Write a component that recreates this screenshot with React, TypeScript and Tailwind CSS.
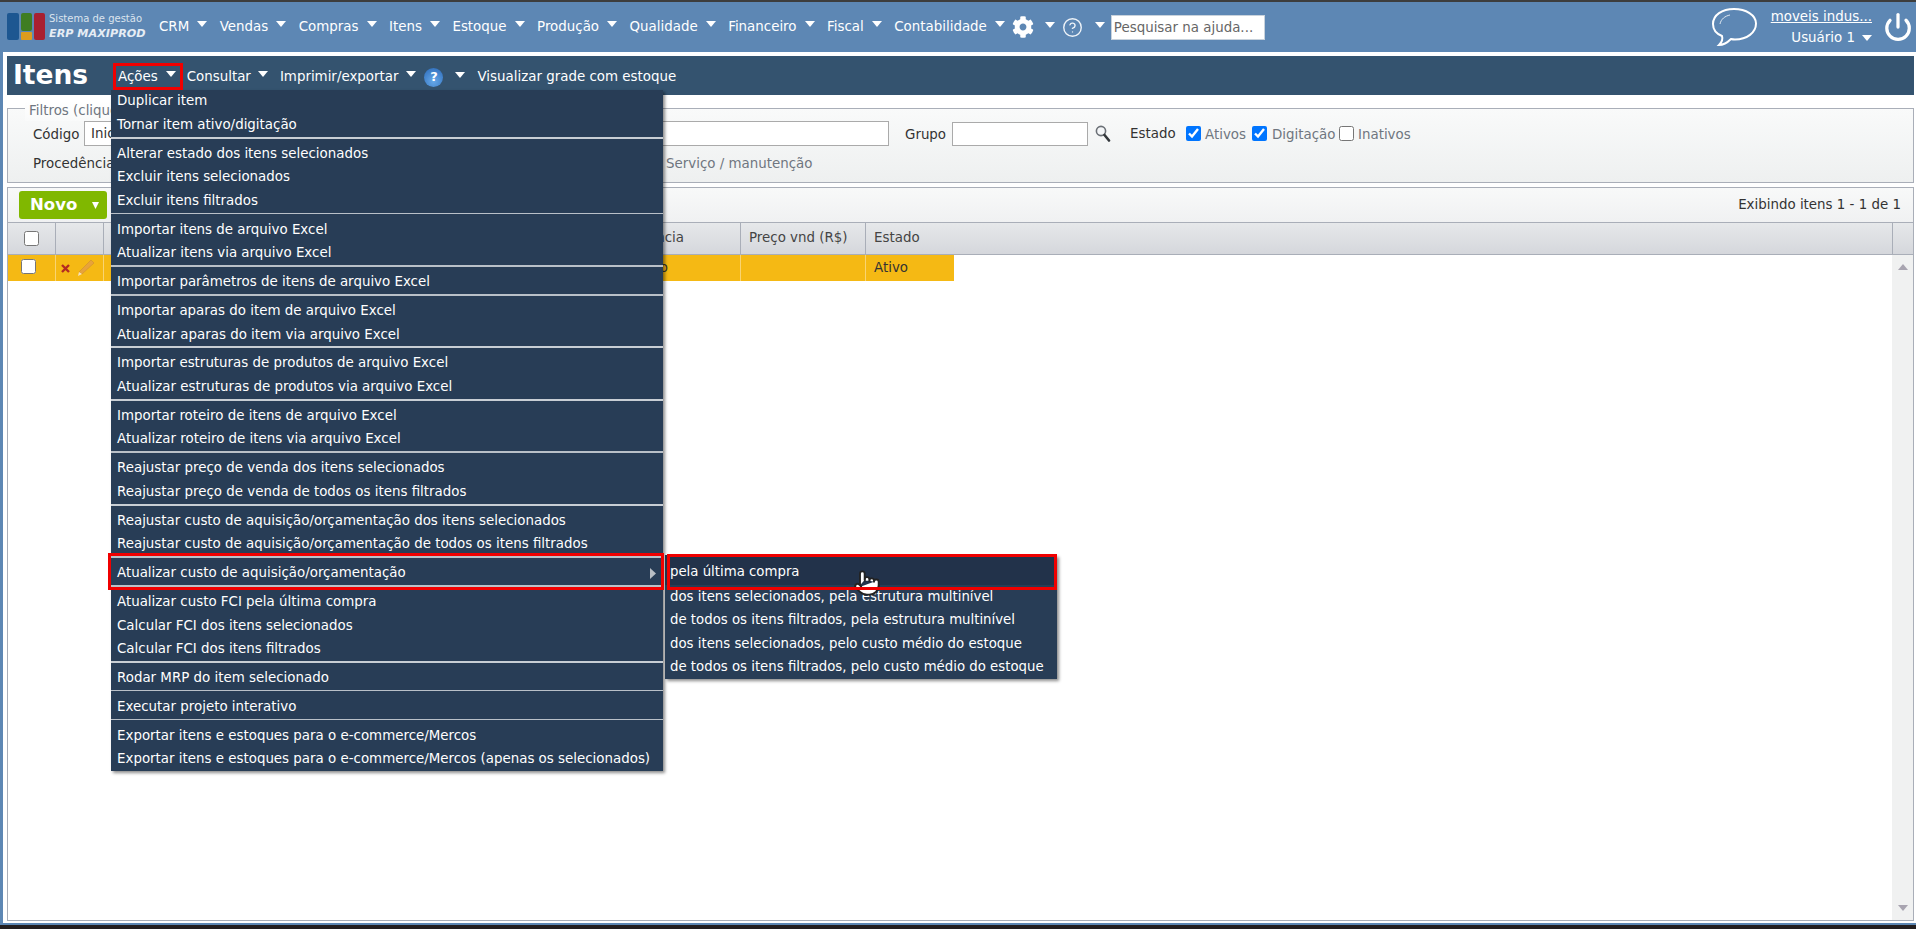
import { CircleHelp, Pointer, Power } from "lucide-react";
import { FaCog } from "react-icons/fa";

const navItems = ["CRM", "Vendas", "Compras", "Itens", "Estoque", "Produção", "Qualidade", "Financeiro", "Fiscal", "Contabilidade"];

// each group ends with a separator, `thick` is the heavier line in the screenshot
const menuGroups = [
  { thick: true, items: ["Duplicar item", "Tornar item ativo/digitação"] },
  { items: ["Alterar estado dos itens selecionados", "Excluir itens selecionados", "Excluir itens filtrados"] },
  { items: ["Importar itens de arquivo Excel", "Atualizar itens via arquivo Excel"] },
  { items: ["Importar parâmetros de itens de arquivo Excel"] },
  { thick: true, items: ["Importar aparas do item de arquivo Excel", "Atualizar aparas do item via arquivo Excel"] },
  { thick: true, items: ["Importar estruturas de produtos de arquivo Excel", "Atualizar estruturas de produtos via arquivo Excel"] },
  { items: ["Importar roteiro de itens de arquivo Excel", "Atualizar roteiro de itens via arquivo Excel"] },
  { thick: true, items: ["Reajustar preço de venda dos itens selecionados", "Reajustar preço de venda de todos os itens filtrados"] },
  { items: ["Reajustar custo de aquisição/orçamentação dos itens selecionados", "Reajustar custo de aquisição/orçamentação de todos os itens filtrados"] },
  { submenu: true, items: ["Atualizar custo de aquisição/orçamentação"] },
  { thick: true, items: ["Atualizar custo FCI pela última compra", "Calcular FCI dos itens selecionados", "Calcular FCI dos itens filtrados"] },
  { items: ["Rodar MRP do item selecionado"] },
  { items: ["Executar projeto interativo"] },
  { last: true, items: ["Exportar itens e estoques para o e-commerce/Mercos", "Exportar itens e estoques para o e-commerce/Mercos (apenas os selecionados)"] },
];

const subItems = [
  "dos itens selecionados, pela estrutura multinível",
  "de todos os itens filtrados, pela estrutura multinível",
  "dos itens selecionados, pelo custo médio do estoque",
  "de todos os itens filtrados, pelo custo médio do estoque",
];

const Caret = ({ className = "" }: { className?: string }) => (
  <svg width="10" height="6" viewBox="0 0 10 6" className={`shrink-0 ${className}`}>
    <polygon points="0,0 10,0 5,6" fill="#fff" />
  </svg>
);

const Logo = () => (
  <svg width="38" height="28" viewBox="0 0 38 28" className="shrink-0">
    <rect x="0" y="0" width="12" height="27" rx="2" fill="#1d5791" />
    <rect x="14" y="0" width="11" height="18" rx="2" fill="#3f7d22" />
    <rect x="14" y="19" width="11" height="8" rx="1" fill="#dc9c1e" />
    <rect x="27" y="0" width="11" height="27" rx="2" fill="#a82030" />
  </svg>
);

const ChatBubble = () => (
  <svg width="46" height="40" viewBox="0 0 46 40" fill="none" className="shrink-0">
    <path d="M23 2C11 2 2 8 2 17c0 6 4 10 9 12 1 3 0 6-3 9 5 0 9-3 12-6 2 .5 2 .5 4 .5 12 0 21-7 21-16C45 8 35 2 23 2Z" stroke="#fff" strokeWidth="2" />
    <path d="M9 17c1-5 5-8 10-9" stroke="#dfe8f1" strokeWidth="1" />
  </svg>
);

const HelpBlue = () => (
  <span className="flex h-[19px] w-[19px] shrink-0 items-center justify-center rounded-full bg-[radial-gradient(circle_at_50%_70%,#66a8e8,#2a69b8)] text-[13px] font-bold text-white">?</span>
);

const PencilMini = () => (
  <svg width="18" height="18" viewBox="0 0 18 18" className="shrink-0">
    <polygon points="14,1 17,4 5,15 2,13" fill="#e8a33a" stroke="#c98a2e" strokeWidth="0.5" />
    <polygon points="2,13 5,15 1,17" fill="#f5e2c0" />
  </svg>
);

const DeleteMini = () => (
  <svg width="9" height="9" viewBox="0 0 9 9" className="shrink-0">
    <path d="M1 1 8 8M8 1 1 8" stroke="#b32a22" strokeWidth="2.4" />
  </svg>
);

const SearchMini = () => (
  <svg width="16" height="17" viewBox="0 0 16 17" fill="none" className="ml-[7px] shrink-0">
    <circle cx="6" cy="6" r="4.6" fill="#f4f6f8" stroke="#6b7076" strokeWidth="1.6" />
    <path d="M9.5 10 14 15.5" stroke="#33373b" strokeWidth="2.6" strokeLinecap="round" />
  </svg>
);

function TopBar() {
  return (
    <header className="flex h-[50px] shrink-0 items-center bg-[#5d87b4] pl-[7px] pr-[3px] text-white">
      <Logo />
      <div className="ml-[4px] w-[110px] shrink-0 leading-none whitespace-nowrap">
        <div className="text-[10px] text-[#dbe4ee]">Sistema de gestão</div>
        <div className="mt-[4px] text-[11.2px] font-bold italic text-[#e6edf4]">ERP MAXIPROD</div>
      </div>
      <nav className="flex items-center gap-[12.5px] text-[13.4px]">
        {navItems.map((item) => (
          <div key={item} className="flex items-center gap-[8px]">
            <span>{item}</span>
            <Caret className="-mt-[5px]" />
          </div>
        ))}
      </nav>
      <FaCog size={22} className="ml-[7px] shrink-0" />
      <Caret className="ml-[11px] -mt-[5px]" />
      <CircleHelp size={21} strokeWidth={1.6} className="ml-[7px] shrink-0 text-[#eef3f8]" />
      <Caret className="ml-[12px] -mt-[5px]" />
      <input
        readOnly
        placeholder="Pesquisar na ajuda..."
        className="ml-[6px] h-[25px] w-[154px] border border-[#c8d2dc] bg-white px-[2px] text-[13.4px] text-[#444] placeholder:text-[#666]"
      />
      <div className="ml-auto flex items-center">
        <ChatBubble />
        <div className="ml-[12px] flex w-[103px] flex-col items-end text-[13.4px] leading-none">
          <span className="underline">moveis indus...</span>
          <div className="mt-[8px] flex items-center gap-[7px]">
            <span>Usuário 1</span>
            <Caret />
          </div>
        </div>
        <Power size={30} strokeWidth={2.6} className="ml-[11px] shrink-0" />
      </div>
    </header>
  );
}

function TitleBar() {
  return (
    <div className="flex h-[39px] shrink-0 items-center bg-[#34536f] pt-[3px] pl-[6px] text-[13.4px] text-white">
      <h1 className="-mt-[3px] w-[105px] text-[26.5px] leading-none font-bold">Itens</h1>
      <div className="flex items-center gap-[8px]">
        <span>Ações</span>
        <Caret className="-mt-[5px]" />
      </div>
      <div className="ml-[11px] flex items-center gap-[7px]">
        <span>Consultar</span>
        <Caret className="-mt-[5px]" />
      </div>
      <div className="ml-[12px] flex items-center gap-[8px]">
        <span>Imprimir/exportar</span>
        <Caret className="-mt-[5px]" />
      </div>
      <div className="ml-[8px]"><HelpBlue /></div>
      <Caret className="ml-[12px] -mt-[5px]" />
      <span className="ml-[12px]">Visualizar grade com estoque</span>
    </div>
  );
}

function Filters() {
  return (
    <div className="relative mt-[13px] h-[75px] shrink-0 border border-[#a9aeb8] bg-linear-to-b from-[#f9fafa] to-[#eef0f0] text-[13.4px] text-[#333]">
      <span className="absolute -top-[8px] left-[17px] bg-linear-to-b from-white to-[#f9fafa] px-[4px] text-[#6f7680]">Filtros (clique</span>
      <div className="mt-[12px] flex h-[25px] items-center pl-[25px]">
        <span className="mt-[4px] w-[51px]">Código</span>
        <input readOnly value="Inicio" className="h-[25px] w-[805px] border border-[#aaa] bg-white px-[6px] text-[13.4px] text-[#333]" />
        <span className="mt-[4px] ml-[16px] w-[47px]">Grupo</span>
        <input readOnly className="h-[24px] w-[136px] border border-[#aaa] bg-white" />
        <SearchMini />
        <span className="mt-[1px] ml-[19px] w-[56px]">Estado</span>
        <input type="checkbox" defaultChecked className="h-[15px] w-[15px]" />
        <span className="mt-[4px] ml-[4px] w-[47px] text-[#6f7680]">Ativos</span>
        <input type="checkbox" defaultChecked className="h-[15px] w-[15px]" />
        <span className="mt-[4px] ml-[5px] w-[67px] text-[#6f7680]">Digitação</span>
        <input type="checkbox" className="h-[15px] w-[15px]" />
        <span className="mt-[4px] ml-[4px] text-[#6f7680]">Inativos</span>
      </div>
      <div className="mt-[8px] flex items-center pl-[25px]">
        <span className="w-[633px]">Procedência</span>
        <span className="text-[#6f7680]">Serviço / manutenção</span>
      </div>
    </div>
  );
}

function ItemsList() {
  return (
    <div className="mt-[4px] flex min-h-0 flex-1 flex-col border border-[#a9aeb8] text-[13.4px] text-[#333]">
      <div className="flex h-[34px] shrink-0 items-center justify-between bg-linear-to-b from-[#f8f9f9] to-[#f0f1f2] pl-[11px] pr-[12px]">
        <button className="flex h-[28px] w-[88px] items-center rounded-[3px] bg-[#80b800] pl-[11px] text-[16.5px] font-bold text-white">
          Novo
          <svg width="7" height="7" viewBox="0 0 7 7" className="ml-[15px]"><polygon points="0,0 7,0 3.5,7" fill="#fff" /></svg>
        </button>
        <span>Exibindo itens 1 - 1 de 1</span>
      </div>
      <div className="flex h-[33px] shrink-0 items-center border-y border-[#a9aeb8] bg-linear-to-b from-[#e6e8ea] to-[#d5d7dc] text-[#444]">
        <div className="flex h-full w-[48px] items-center justify-center border-r border-[#a9aeb8]">
          <input type="checkbox" className="h-[15px] w-[15px]" />
        </div>
        <div className="h-full w-[48px] border-r border-[#a9aeb8]" />
        <div className="flex h-full w-[637px] items-center justify-end border-r border-[#a9aeb8] pr-[56px]">Procedência</div>
        <div className="flex h-full w-[125px] items-center border-r border-[#a9aeb8] pl-[8px]">Preço vnd (R$)</div>
        <div className="flex h-full flex-1 items-center border-r border-[#a9aeb8] pl-[8px]">Estado</div>
        <div className="w-[20px]" />
      </div>
      <div className="flex min-h-0 flex-1">
        <div className="flex-1">
          <div className="flex h-[26px] w-[946px] items-center bg-[#f5b914] text-[#333]">
            <div className="flex h-full w-[48px] items-center justify-center border-r border-[#f9d472] pr-[6px] pb-[4px]">
              <input type="checkbox" className="h-[15px] w-[15px]" />
            </div>
            <div className="flex h-full w-[48px] items-center gap-[7px] border-r border-[#f9d472] pl-[5px]">
              <DeleteMini />
              <PencilMini />
            </div>
            <div className="flex h-full w-[637px] items-center justify-end border-r border-[#f9d472] pr-[72px]">Comprado</div>
            <div className="h-full w-[125px] border-r border-[#f9d472]" />
            <div className="flex h-full flex-1 items-center pl-[8px]">Ativo</div>
          </div>
        </div>
        <div className="flex w-[21px] flex-col items-center justify-between bg-[#f0f1f1] py-[9px]">
          <svg width="10" height="6" viewBox="0 0 10 6"><polygon points="0,6 10,6 5,0" fill="#a8a4b0" /></svg>
          <svg width="10" height="6" viewBox="0 0 10 6"><polygon points="0,0 10,0 5,6" fill="#a8a4b0" /></svg>
        </div>
      </div>
    </div>
  );
}

function ActionsMenu() {
  return (
    <div className="absolute top-[87.5px] left-[111px] z-10 w-[552px] bg-[#283d56] text-[13.4px] text-white shadow-[2px_2px_3px_rgba(0,0,0,0.45)]">
      {menuGroups.map((group) => (
        <div key={group.items[0]}>
          {group.items.map((item) => (
            <div key={item} className="flex h-[23.6px] items-center justify-between pl-[6px] pr-[7px]">
              <span>{item}</span>
              {group.submenu && (
                <svg width="6" height="11" viewBox="0 0 6 11"><polygon points="0,0 6,5.5 0,11" fill="#b9bec4" /></svg>
              )}
            </div>
          ))}
          {!group.last && (
            <div className={group.thick ? "mb-[3.25px] h-[2px] bg-[#c8ced4]" : "mb-[3.75px] h-[1.5px] bg-[#b9c0c8]"} />
          )}
        </div>
      ))}
    </div>
  );
}

function SubMenu() {
  return (
    <div className="absolute top-[553px] left-[665px] z-10 w-[392px] bg-[#283d56] text-[13.3px] text-white shadow-[2px_2px_3px_rgba(0,0,0,0.45)]">
      <div className="flex h-[30px] items-center bg-[#22324a] pt-[3px] pl-[5px]">pela última compra</div>
      {subItems.map((item) => (
        <div key={item} className="flex h-[23.4px] items-center pl-[5px]">{item}</div>
      ))}
    </div>
  );
}

export default function App() {
  return (
    <div className="relative flex h-[929px] w-[1916px] flex-col overflow-hidden border-t-2 border-[#3d3d3d] bg-[#5d87b4] font-['DejaVu_Sans',Verdana,sans-serif]">
      <TopBar />
      <main className="ml-[3px] flex min-h-0 flex-1 flex-col bg-white pt-[4px] pr-[2px] pb-[2px] pl-[4px]">
        <TitleBar />
        <Filters />
        <ItemsList />
      </main>
      <div className="h-[2px] shrink-0 bg-[#5d87b4]" />
      <div className="h-[4px] shrink-0 bg-[#231f20]" />

      <ActionsMenu />
      <SubMenu />

      <Pointer size={28} strokeWidth={1.6} fill="#fff" className="absolute top-[567px] left-[853px] z-20 text-[#222]" />

      {/* red annotation boxes */}
      <div className="absolute top-[61px] left-[113px] z-30 h-[27px] w-[70px] border-[3px] border-[#f00000]" />
      <div className="absolute top-[551px] left-[108px] z-30 h-[37px] w-[556px] border-[3px] border-[#f00000]" />
      <div className="absolute top-[552px] left-[667px] z-30 h-[36px] w-[390px] border-[3px] border-[#f00000]" />
    </div>
  );
}
